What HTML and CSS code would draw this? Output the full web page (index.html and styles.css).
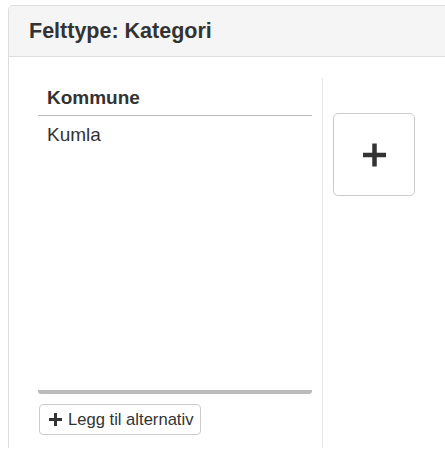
FILE: index.html
```html
<!DOCTYPE html>
<html lang="no">
<head>
<meta charset="utf-8">
<title>Felttype: Kategori</title>
<link rel="stylesheet" href="styles.css">
</head>
<body>
<div class="panel">
  <div class="panel-heading">Felttype: Kategori</div>
  <div class="panel-body">
    <div class="list-col">
      <div class="list">
        <div class="list-head">Kommune</div>
        <div class="list-item">Kumla</div>
      </div>
      <div class="list-bar"></div>
      <button class="add-btn" type="button">
        <svg class="add-icon" width="15" height="15" viewBox="0 0 15 15"><path d="M7.5 1v13M1 7.5h13" stroke="#333" stroke-width="3" fill="none"/></svg>
        <span>Legg til alternativ</span>
      </button>
    </div>
    <div class="side-col">
      <button class="big-btn" type="button" aria-label="Legg til">
        <svg width="25" height="24" viewBox="0 0 25 24"><path d="M12.5 0.5v23M1 12h23" stroke="#333" stroke-width="4.5" fill="none"/></svg>
      </button>
    </div>
  </div>
</div>
</body>
</html>
```
FILE: styles.css
```css
html, body {
  margin: 0;
  padding: 0;
  background: #fff;
  overflow: hidden;
}
body {
  font-family: "Liberation Sans", Arial, Helvetica, sans-serif;
  color: #333;
  width: 445px;
  height: 449px;
}
.panel {
  margin: 5px -20px 0 8px;
  border: 1px solid #ddd;
  border-bottom: 0;
  border-radius: 5px 5px 0 0;
  background: #fff;
}
.panel-heading {
  height: 51px;
  box-sizing: border-box;
  padding: 0 0 0 20px;
  display: flex;
  align-items: center;
  background: #f5f5f5;
  border-bottom: 1px solid #ddd;
  border-radius: 4px 4px 0 0;
  font-weight: bold;
  font-size: 21.5px;
}
.panel-body {
  display: flex;
  padding: 21px 0 0 29px;
  height: 370px;
}
.list-col {
  width: 274px;
  padding-right: 10px;
  border-right: 1px solid #e6e6e6;
  display: flex;
  flex-direction: column;
}
.list {
  height: 312px;
}
.list-head {
  font-weight: bold;
  font-size: 19px;
  line-height: 22px;
  padding: 9px 9px 6px;
  border-bottom: 1px solid #bbb;
}
.list-item {
  font-size: 19px;
  line-height: 22px;
  padding: 8px 9px;
}
.list-bar {
  height: 4px;
  background: #bbb;
  border-radius: 0 0 3px 3px;
}
.add-btn {
  align-self: flex-start;
  margin: 10px 0 0 1px;
  height: 31px;
  box-sizing: border-box;
  padding: 0 7px 0 8px;
  display: flex;
  align-items: center;
  gap: 5px;
  background: #fff;
  border: 1px solid #ccc;
  border-radius: 4px;
  font-family: "Liberation Sans", Arial, Helvetica, sans-serif;
  font-size: 16.6px;
  color: #333;
}
.add-icon {
  display: block;
}
.side-col {
  padding: 35px 0 0 10px;
}
.big-btn {
  width: 82px;
  height: 83px;
  box-sizing: border-box;
  display: flex;
  align-items: center;
  justify-content: center;
  background: #fff;
  border: 1px solid #ccc;
  border-radius: 5px;
  padding: 0;
}
.big-btn svg {
  display: block;
}
```
